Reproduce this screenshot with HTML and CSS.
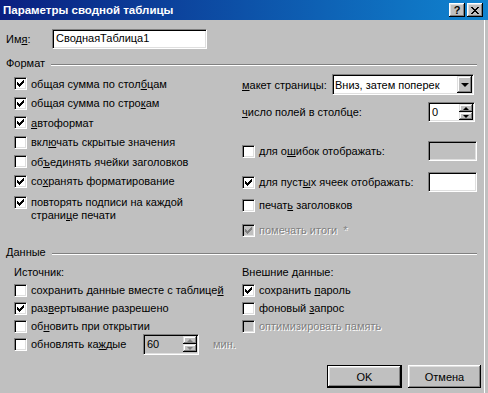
FILE: index.html
```html
<!DOCTYPE html>
<html lang="ru">
<head>
    <meta charset="UTF-8">
    <title>Параметры сводной таблицы</title>
    <link rel="stylesheet" href="styles.css">
</head>
<body>
    <div class="dialog">
        <div class="titlebar">
            <span class="title">Параметры сводной таблицы</span>
            <div class="title-buttons">
                <span class="tbtn help">?</span>
                <span class="tbtn close">
                    <svg width="8" height="7" viewBox="0 0 8 7" shape-rendering="crispEdges">
                        <path d="M0 0h2v1h-2zM6 0h2v1h-2zM1 1h2v1h-2zM5 1h2v1h-2zM2 2h4v1h-4zM3 3h2v1h-2zM2 4h4v1h-4zM1 5h2v1h-2zM5 5h2v1h-2zM0 6h2v1h-2zM6 6h2v1h-2z" fill="#000"/>
                    </svg>
                </span>
            </div>
        </div>

        <div class="content">
            <div class="name-row">
                <span class="name-label">Им<u>я</u>:</span>
                <div class="field name-field">СводнаяТаблица1</div>
            </div>

            <div class="group-head"><span>Формат</span><span class="rule"></span></div>
            <div class="columns format">
                <div class="col col-left">
                    <div class="check"><span class="box checked"></span><span>общая сумма по стол<u>б</u>цам</span></div>
                    <div class="check"><span class="box checked"></span><span>общая сумма по стро<u>к</u>ам</span></div>
                    <div class="check"><span class="box checked"></span><span><u>а</u>втоформат</span></div>
                    <div class="check"><span class="box"></span><span>вкл<u>ю</u>чать скрытые значения</span></div>
                    <div class="check"><span class="box"></span><span>об<u>ъ</u>единять ячейки заголовков</span></div>
                    <div class="check"><span class="box checked"></span><span>со<u>х</u>ранять форматирование</span></div>
                    <div class="check multi"><span class="box checked"></span><span>повторять подписи на каждой<br>страни<u>ц</u>е печати</span></div>
                </div>
                <div class="col col-right">
                    <div class="field-row row-layout">
                        <span><u>м</u>акет страницы:</span>
                        <div class="field combo">
                            <span class="combo-text">Вниз, затем поперек</span>
                            <span class="raised drop"><span class="tri-down"></span></span>
                        </div>
                    </div>
                    <div class="field-row row-count">
                        <span><u>ч</u>исло полей в столбце:</span>
                        <div class="field spin count-spin">
                            <span class="spin-text">0</span>
                            <span class="spin-btns">
                                <span class="raised"><span class="tri-up"></span></span>
                                <span class="raised"><span class="tri-down small"></span></span>
                            </span>
                        </div>
                    </div>
                    <div class="field-row row-err">
                        <div class="check"><span class="box"></span><span>для о<u>ш</u>ибок отображать:</span></div>
                        <div class="field text-box disabled"></div>
                    </div>
                    <div class="field-row row-empty">
                        <div class="check"><span class="box checked"></span><span>для пуст<u>ы</u>х ячеек отображать:</span></div>
                        <div class="field text-box"></div>
                    </div>
                    <div class="check row-print"><span class="box"></span><span>печат<u>ь</u> заголовков</span></div>
                    <div class="check row-mark off"><span class="box checked"></span><span>помечать итоги &nbsp;*</span></div>
                </div>
            </div>

            <div class="group-head data-head"><span>Данные</span><span class="rule"></span></div>
            <div class="columns data">
                <div class="col col-left">
                    <div class="subhead">Источник:</div>
                    <div class="check"><span class="box"></span><span>сохранить данные вместе с таблице<u>й</u></span></div>
                    <div class="check"><span class="box checked"></span><span>раз<u>в</u>ертывание разрешено</span></div>
                    <div class="check"><span class="box"></span><span>об<u>н</u>овить при открытии</span></div>
                    <div class="check">
                        <span class="box"></span><span class="every-label">обновлять ка<u>ж</u>дые</span>
                        <div class="field spin every-spin disabled">
                            <span class="spin-text">60</span>
                            <span class="spin-btns">
                                <span class="raised"><span class="tri-up"></span></span>
                                <span class="raised"><span class="tri-down small"></span></span>
                            </span>
                        </div>
                        <span class="muted min">мин.</span>
                    </div>
                </div>
                <div class="col col-right">
                    <div class="subhead">Внешние данные:</div>
                    <div class="check"><span class="box checked"></span><span>сохранить <u>п</u>ароль</span></div>
                    <div class="check"><span class="box"></span><span>фоновый <u>з</u>апрос</span></div>
                    <div class="check off"><span class="box"></span><span>оптимизировать память</span></div>
                </div>
            </div>

            <div class="buttons">
                <button class="btn default">OK</button>
                <button class="btn">Отмена</button>
            </div>
        </div>
    </div>
</body>
</html>
```

FILE: styles.css
```css
* {
    box-sizing: border-box;
}

html, body {
    margin: 0;
    padding: 0;
}

body {
    background-color: #c0c0c0;
    font-family: "Liberation Sans", Arial, sans-serif;
    font-size: 11px;
    color: #000;
}

.dialog {
    width: 488px;
    height: 393px;
    /* thin light edge of the window frame on the right */
    background: linear-gradient(to right, #c0c0c0 484px, #fff 484px, #fff 485px, #c0c0c0 485px);
}

u {
    text-underline-offset: 1px;
}

/* title bar */
.titlebar {
    height: 20px;
    display: flex;
    align-items: center;
    justify-content: space-between;
    padding: 0 5px 0 3px;
    background: linear-gradient(to right, #0a1f80, #1084d0);
}

.title {
    color: #fff;
    font-weight: bold;
    font-size: 11.5px;
}

.title-buttons {
    display: flex;
    gap: 2px;
}

.tbtn {
    width: 16px;
    height: 14px;
    display: flex;
    align-items: center;
    justify-content: center;
    background-color: #c0c0c0;
    box-shadow: inset -1px -1px #000, inset 1px 1px #fff, inset -2px -2px #808080, inset 2px 2px #dfdfdf;
    font-weight: bold;
    font-size: 11px;
    line-height: 1;
}

/* common controls */
.raised {
    background-color: #c0c0c0;
    box-shadow: inset -1px -1px #000, inset 1px 1px #dfdfdf, inset -2px -2px #808080, inset 2px 2px #fff;
}

.field {
    background-color: #fff;
    border: 1px solid;
    border-color: #808080 #fff #fff #808080;
    box-shadow: inset 1px 1px #000, inset -1px -1px #dfdfdf;
}

.field.disabled {
    background-color: #c0c0c0;
}

.content {
    padding: 0 11px 0 6px;
}

.name-row {
    margin-top: 9px;
    height: 20px;
    display: flex;
    align-items: center;
}

.name-label {
    width: 46px;
}

.name-field {
    width: 155px;
    height: 20px;
    padding: 2px 0 0 3px;
}

.group-head {
    height: 14px;
    display: flex;
    align-items: center;
    gap: 6px;
    margin-top: 7px;
}

.group-head.data-head {
    margin-top: 0;
}

.rule {
    flex: 1;
    height: 2px;
    margin-top: 3px;
    border-top: 1px solid #808080;
    border-bottom: 1px solid #fff;
}

.columns {
    display: flex;
    margin-top: 4px;
}

.format {
    height: 171px;
}

.col-left {
    width: 236px;
    padding-left: 8px;
}

.col-right {
    flex: 1;
}

/* checkboxes */
.check {
    display: flex;
    align-items: center;
    gap: 4px;
    height: 19.5px;
    white-space: nowrap;
}

.check.multi {
    align-items: flex-start;
    height: 39px;
    padding-top: 4.5px;
    line-height: 13px;
}

.box {
    flex: none;
    width: 13px;
    height: 13px;
    background-color: #fff;
    border: 1px solid;
    border-color: #808080 #fff #fff #808080;
    box-shadow: inset 1px 1px #000, inset -1px -1px #dfdfdf;
}

.box.checked {
    background-image: url("data:image/svg+xml,%3Csvg xmlns='http://www.w3.org/2000/svg' width='11' height='11' shape-rendering='crispEdges'%3E%3Cpath d='M8 2h1v3h-1zM7 3h1v3h-1zM6 4h1v3h-1zM5 5h1v3h-1zM4 6h1v3h-1zM3 5h1v3h-1zM2 4h1v3h-1z' fill='%23000'/%3E%3C/svg%3E");
    background-repeat: no-repeat;
}

.off {
    color: #808080;
    text-shadow: 1px 1px 0 #fff;
}

.off .box {
    background-color: #c0c0c0;
}

.off .box.checked {
    background-image: url("data:image/svg+xml,%3Csvg xmlns='http://www.w3.org/2000/svg' width='11' height='11' shape-rendering='crispEdges'%3E%3Cpath d='M8 2h1v3h-1zM7 3h1v3h-1zM6 4h1v3h-1zM5 5h1v3h-1zM4 6h1v3h-1zM3 5h1v3h-1zM2 4h1v3h-1z' fill='%23808080'/%3E%3C/svg%3E");
}

.muted {
    color: #808080;
    text-shadow: 1px 1px 0 #fff;
}

/* right column of the format group */
.field-row {
    display: flex;
    align-items: center;
    justify-content: space-between;
}

.row-layout {
    height: 21px;
}

.row-count {
    height: 20px;
    margin-top: 7px;
}

.row-err {
    height: 20px;
    margin-top: 19px;
}

.row-empty {
    height: 20px;
    margin-top: 11px;
}

.row-print {
    height: 20px;
    margin-top: 3px;
}

.row-mark {
    height: 20px;
    margin-top: 5px;
}

.combo {
    width: 142px;
    height: 21px;
    margin-right: 3px;
    display: flex;
    align-items: center;
    justify-content: space-between;
    padding: 0 1px 0 2px;
}

.drop {
    width: 15px;
    height: 17px;
    display: flex;
    align-items: center;
    justify-content: center;
}

.tri-down {
    width: 0;
    height: 0;
    border-left: 4px solid transparent;
    border-right: 4px solid transparent;
    border-top: 4px solid #000;
}

.tri-down.small {
    border-left-width: 3px;
    border-right-width: 3px;
    border-top-width: 3px;
}

.tri-up {
    width: 0;
    height: 0;
    border-left: 3px solid transparent;
    border-right: 3px solid transparent;
    border-bottom: 3px solid #000;
}

.spin {
    display: flex;
    align-items: center;
    justify-content: space-between;
    padding: 1px 1px 1px 3px;
}

.count-spin {
    width: 47px;
    height: 20px;
    margin-right: 2px;
}

.spin-btns {
    display: flex;
    flex-direction: column;
    height: 16px;
}

.spin-btns .raised {
    width: 14px;
    height: 8px;
    display: flex;
    align-items: center;
    justify-content: center;
}

.spin.disabled .tri-up {
    border-bottom-color: #808080;
}

.spin.disabled .tri-down {
    border-top-color: #808080;
}

.text-box {
    width: 49px;
    height: 20px;
}

/* data group */
.data .check {
    height: 18px;
}

.subhead {
    height: 18px;
    line-height: 18px;
}

.every-label {
    min-width: 108px;
}

.every-spin {
    width: 56px;
    height: 21px;
}

.min {
    margin-left: 10px;
}

/* buttons */
.buttons {
    display: flex;
    justify-content: flex-end;
    gap: 6px;
    margin-top: 12px;
    margin-right: -4px;
}

.btn {
    width: 73px;
    height: 23px;
    font-family: inherit;
    font-size: 11px;
    color: #000;
    background-color: #c0c0c0;
    border: none;
    padding: 0;
    box-shadow: inset -1px -1px #000, inset 1px 1px #fff, inset -2px -2px #808080, inset 2px 2px #dfdfdf;
}

.btn.default {
    width: 75px;
    border: 1px solid #000;
}
```
